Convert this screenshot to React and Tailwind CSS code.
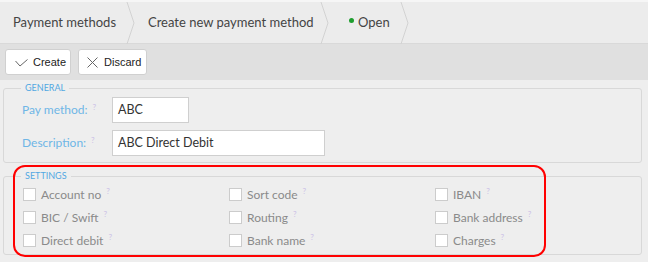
const SANS = "font-['Lato',sans-serif]";

function Chevron() {
  return (
    <svg width="9" height="42" viewBox="0 0 9 42" className="shrink-0">
      <path d="M1 0 L8 21 L1 42" fill="none" stroke="#d2d2d2" strokeWidth="1" />
    </svg>
  );
}

function Hint() {
  return <sup className="ml-[5px] text-[8px] text-[#cbbfe6]">?</sup>;
}

function Field({ label, value, width }) {
  return (
    <div className="flex items-center">
      <label className="w-[90px] text-[12px] text-[#6fb6e6]">
        {label}
        <Hint />
      </label>
      <div
        className={`flex h-[26px] items-center border border-[#cfcfcf] bg-white px-[5px] text-[12.5px] text-[#333] ${width}`}
      >
        {value}
      </div>
    </div>
  );
}

function Option({ label }) {
  return (
    <div className="flex h-[23px] items-center">
      <span className="h-[13px] w-[13px] shrink-0 border border-[#cccccc] bg-white" />
      <span className="ml-[5px] text-[12px] text-[#8a8a8a]">{label}</span>
      <Hint />
    </div>
  );
}

const OPTIONS = [
  'Account no', 'Sort code', 'IBAN',
  'BIC / Swift', 'Routing', 'Bank address',
  'Direct debit', 'Bank name', 'Charges',
];

export default function App() {
  return (
    <div className={`flex h-[262px] w-[648px] flex-col overflow-hidden bg-[#eeeeee] ${SANS}`}>
      {/* breadcrumb */}
      <div className="border-t-2 border-[#f6f6f6]">
        <div className="flex h-[42px] items-center whitespace-nowrap border-b border-[#d9d9d9] bg-[#ececec] text-[13px] text-[#444]">
          <span className="w-[126px] pl-[13px]">Payment methods</span>
          <Chevron />
          <span className="w-[185px] pl-[13px]">Create new payment method</span>
          <Chevron />
          <span className="flex w-[71px] items-center pl-[20px]">
            <span className="mr-[4px] mb-[5px] h-[5px] w-[5px] rounded-full bg-[#1e9e2e]" />
            Open
          </span>
          <Chevron />
        </div>
      </div>

      {/* toolbar */}
      <div className="flex h-[36px] items-center gap-[7px] bg-[#e0e0e0] px-[5px] font-['Liberation_Sans',sans-serif] text-[11px] text-[#222]">
        <button className="flex h-[26px] w-[66px] items-center gap-[5px] rounded-[3px] border border-[#d0d0d0] bg-white pl-[9px]">
          <svg width="13" height="8" viewBox="0 0 13 8" className="mt-[2px]">
            <path d="M0.5 2 L5 7 L12.5 0.5" fill="none" stroke="#666" strokeWidth="1" />
          </svg>
          Create
        </button>
        <button className="flex h-[26px] w-[69px] items-center gap-[6px] rounded-[3px] border border-[#d0d0d0] bg-white pl-[8px]">
          <svg width="11" height="11" viewBox="0 0 11 11">
            <path d="M0.5 0.5 L10.5 10.5 M10.5 0.5 L0.5 10.5" fill="none" stroke="#666" strokeWidth="1" />
          </svg>
          Discard
        </button>
      </div>

      {/* content */}
      <div className="relative flex flex-col gap-[8px] px-[3px] pt-[3px]">
        <fieldset className="w-[639px] rounded-[3px] border border-[#d8d8d8] pb-[6px] pl-[18px] pr-[8px]">
          <legend className="-ml-px px-[4px] text-[9px] leading-[10px] text-[#52a8e2]">GENERAL</legend>
          <div className="flex flex-col gap-[7px] pt-[4px]">
            <Field label="Pay method:" value="ABC" width="w-[77px]" />
            <Field label="Description:" value="ABC Direct Debit" width="w-[213px]" />
          </div>
        </fieldset>

        <fieldset className="w-[639px] rounded-[3px] border border-[#d8d8d8] pb-[2px] pl-[19px]">
          <legend className="-ml-[2px] px-[4px] text-[9px] leading-[10px] text-[#52a8e2]">SETTINGS</legend>
          <div className="mt-[2px] grid grid-cols-[206px_206px_206px]">
            {OPTIONS.map((o) => (
              <Option key={o} label={o} />
            ))}
          </div>
        </fieldset>

        {/* annotation outline */}
        <div className="pointer-events-none absolute left-[13px] top-[85px] h-[92px] w-[533px] rounded-[12px] border-2 border-[#ff0000]" />
      </div>
    </div>
  );
}
